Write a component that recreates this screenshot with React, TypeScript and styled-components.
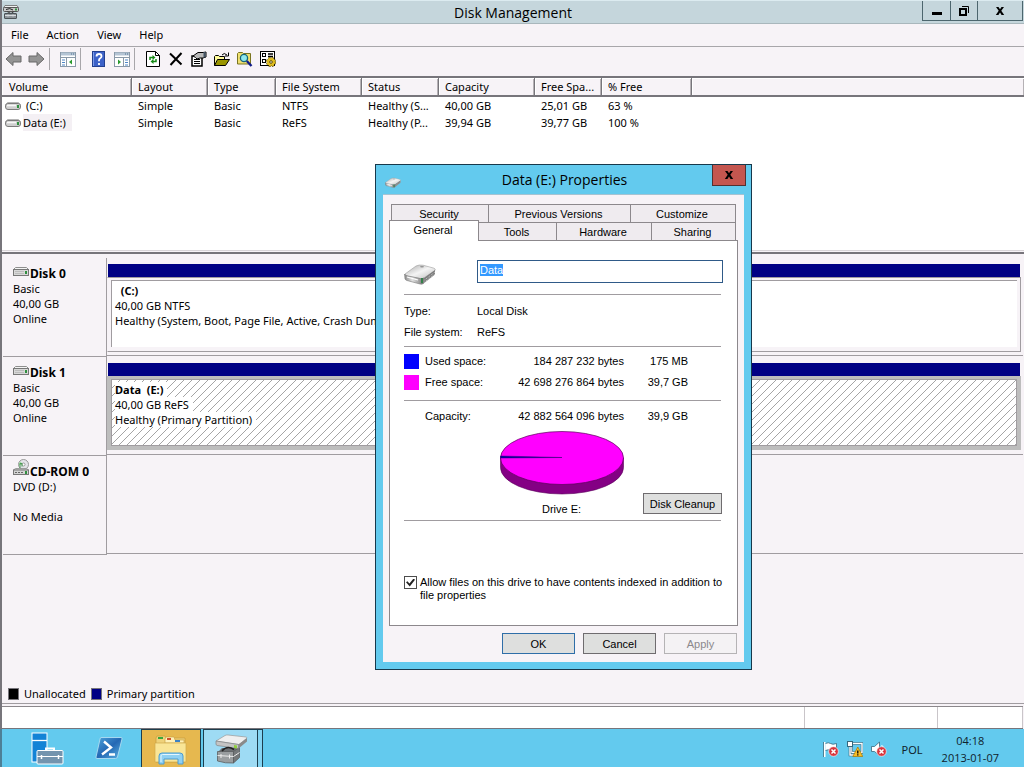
import React, { useEffect, useRef } from "react";
import styled, { createGlobalStyle, css } from "styled-components";

const UI = `"Noto Sans", "Open Sans", sans-serif`;
const TITLE = `"Open Sans", "Noto Sans", sans-serif`;
const DLG = `"Liberation Sans", Arial, sans-serif`;

const Global = createGlobalStyle`
  *, *::before, *::after { box-sizing: border-box; }
  body { margin: 0; background: #f7f3f7; color: #000; font: 11px/15px ${UI}; }
  button, input { font: inherit; color: inherit; margin: 0; border-radius: 0; }
  button { padding: 0; border: 0; background: none; }
  svg { display: block; flex: none; }
`;

const Screen = styled.div`
  position: relative;
  display: flex;
  flex-direction: column;
  min-height: 100vh;
  overflow: hidden;
`;

const MainWindow = styled.main`
  flex: 1;
  display: flex;
  flex-direction: column;
  border-left: 2px solid #77757b;
  background: #f7f3f7;
`;

const TitleBar = styled.header`
  display: grid;
  grid-template-columns: 1fr auto 1fr;
  align-items: center;
  height: 24px;
  padding: 0 1px 0 1px;
  background: #c5d6dc;
  border-top: 1px solid #dcebf0;
  border-bottom: 1px solid #a9b7bc;
`;

const WindowTitle = styled.h1`
  margin: 0;
  padding-top: 1px;
  font: 400 14px/20px ${TITLE};
`;

const CaptionButtons = styled.div`
  justify-self: end;
  align-self: start;
  display: flex;
  border: 1px solid #4d666e;
  border-top: 0;
`;

const CaptionButton = styled.button<{ $wide?: boolean }>`
  display: grid;
  place-items: center;
  width: ${(p) => (p.$wide ? 45 : 27)}px;
  height: 19px;
  & + & { border-left: 1px solid #4d666e; }
`;

const MenuBar = styled.nav`
  display: flex;
  align-items: center;
  height: 23px;
  border-bottom: 1px solid #a8a6aa;
`;

const MenuItem = styled.button`
  padding: 0 9px;
  line-height: 20px;
`;

const Toolbar = styled.div`
  display: flex;
  align-items: center;
  height: 29px;
  padding-bottom: 5px;
`;

const ToolButton = styled.button`
  display: grid;
  place-items: center;
  width: 23px;
  height: 23px;
`;

const ToolSeparator = styled.span`
  width: 1px;
  height: 22px;
  margin: 0 6px 0 1px;
  background: #a8a6aa;
`;

const VolumePane = styled.section`
  height: 175px;
  border-top: 2px solid #77757b;
  border-bottom: 1px solid #d9d5d9;
  background: #fff;
`;

const VolumeTable = styled.table`
  width: 100%;
  table-layout: fixed;
  border-collapse: separate;
  border-spacing: 0;
  text-align: left;
  th, td { padding: 0 0 0 6px; white-space: nowrap; overflow: hidden; font-weight: 400; }
  th {
    height: 19px;
    padding-top: 1px;
    line-height: 16px;
    background: #f7f3f7;
    border-right: 1px solid #77757b;
    border-bottom: 2px solid #77757b;
    box-shadow: inset 1px 1px 0 #fff, inset -1px 0 0 #b5b1b5;
  }
  th:first-child { padding-left: 7px; }
  th:last-child { border-right: 0; }
  td { height: 17px; line-height: 17px; }
  td:first-child { padding-left: 3px; }
`;

const VolumeName = styled.span<{ $selected?: boolean }>`
  display: flex;
  align-items: center;
  gap: 2px;
  span {
    padding: 0 6px 0 ${(p) => (p.$selected ? 0 : 3)}px;
    background: ${(p) => (p.$selected ? "#f4f0f4" : "transparent")};
  }
`;

const DiskPane = styled.section`
  flex: 1;
  display: flex;
  flex-direction: column;
  margin-top: 1px;
  padding: 4px 1px 0 1px;
  border-top: 2px solid #77757b;
`;

const DiskRow = styled.article`
  display: flex;
  height: 99px;
`;

const DiskLabel = styled.div`
  width: 104px;
  padding: 8px 0 0 10px;
  border-right: 1px solid #a09ca0;
  border-bottom: 1px solid #a09ca0;
  p { margin: 0; min-height: 15px; }
`;

const DiskName = styled.h2`
  display: flex;
  align-items: flex-end;
  gap: 1px;
  height: 15px;
  margin: 0;
  font-size: 12px;
  line-height: 15px;
  white-space: nowrap;
  svg { margin-bottom: 4px; }
`;

const DiskBody = styled.div`
  flex: 1;
  min-width: 0;
  height: 98px;
  padding: 6px 2px 0 0;
  border-bottom: 1px solid #a09ca0;
`;

const PartitionBar = styled.div`
  height: 13px;
  margin: 0 1px;
  background: #000084;
`;

const Partition = styled.div<{ $selected?: boolean }>`
  height: 75px;
  padding: 2px 3px 3px;
  border: 1px solid #a09ca0;
  border-left-color: #f7f3f7;
  ${(p) =>
    p.$selected &&
    css`
      height: 74px;
      background: #bdbdbd;
      border-color: #bdbdbd;
    `}
`;

const PartitionInfo = styled.div<{ $selected?: boolean }>`
  height: 67px;
  padding: 2px 3px;
  background: #fff;
  border-top: 1px solid #a09ca0;
  border-left: 1px solid #a09ca0;
  white-space: nowrap;
  overflow: hidden;
  p { width: max-content; margin: 0; padding-right: 4px; white-space: pre; }
  ${(p) =>
    p.$selected &&
    css`
      border: 1px solid #a09ca0;
      background: linear-gradient(135deg, #fff 46%, #a5a5a5 46%, #a5a5a5 54%, #fff 54%) 0 0 / 8px 8px;
      p { background: #fff; }
    `}
`;

const Legend = styled.div`
  display: flex;
  align-items: center;
  gap: 5px;
  height: 20px;
  padding-left: 6px;
  border-bottom: 1px solid #a09ca0;
`;

const LegendSwatch = styled.span<{ $color: string }>`
  width: 11px;
  height: 12px;
  border: 1px solid #77757b;
  background: ${(p) => p.$color};
`;

const StatusBar = styled.footer`
  display: grid;
  grid-template-columns: 1fr 133px 85px;
  height: 23px;
  margin: 2px 1px 0 0;
  border-top: 1px solid #8c888c;
  border-bottom: 1px solid #77757b;
  background: #fff;
  span { border-right: 1px solid #c9c5c9; }
`;

const Taskbar = styled.footer`
  display: flex;
  align-items: stretch;
  height: 38px;
  padding-left: 14px;
  border-left: 2px solid #4d7f96;
  background: #63caee;
`;

const TaskButton = styled.button<{ $width: number; $kind?: "group" | "active" }>`
  display: grid;
  place-items: center;
  width: ${(p) => p.$width}px;
  ${(p) =>
    p.$kind === "group" &&
    css`
      background: #e6b84f;
      border: solid #1d3d4d;
      border-width: 1px 1px 0;
      margin: 0 2px 0 1px;
    `}
  ${(p) =>
    p.$kind === "active" &&
    css`
      background: #9edbf4;
      border: solid #1d3d4d;
      border-width: 1px 1px 0;
    `}
`;

const TaskStack = styled.span`
  width: 5px;
  border: solid #1d3d4d;
  border-width: 1px 1px 0 0;
  background: #84d4f2;
`;

const Tray = styled.div`
  display: flex;
  align-items: center;
  gap: 8px;
  margin-left: auto;
  padding: 2px 25px 0 0;
  color: #10222c;
`;

const TrayLabel = styled.span`
  margin: 0 11px 0 7px;
`;

const Clock = styled.time`
  font: 11px/17px ${TITLE};
  text-align: center;
`;

const Dialog = styled.div`
  position: absolute;
  left: 375px;
  top: 164px;
  width: 377px;
  border: 1px solid #17384b;
  padding: 0 7px 7px;
  background: #63caee;
  font: 11px/13px ${DLG};
`;

const DialogTitle = styled.header`
  display: grid;
  grid-template-columns: 34px 1fr 34px;
  align-items: center;
  height: 29px;
  margin-right: -2px;
  > svg { margin: 5px 0 0 2px; }
  h2 {
    margin: 0;
    padding-top: 1px;
    font: 400 14px/20px ${TITLE};
    text-align: center;
  }
`;

const CloseButton = styled.button`
  align-self: start;
  display: grid;
  place-items: center;
  height: 21px;
  background: #c4564f;
  border: 1px solid #55302f;
  border-top: 0;
`;

const DialogBody = styled.form`
  padding: 9px 6px 8px;
  border-top: 1px solid #a6c3d2;
  background: #f7f3f7;
`;

const TabRow = styled.div<{ $columns: string }>`
  display: grid;
  grid-template-columns: ${(p) => p.$columns};
  height: 18px;
  margin: 0 2px;
`;

const FrontTabRow = styled(TabRow)`
  margin: 0 2px 0 0;
`;

const Tab = styled.button<{ $active?: boolean }>`
  border: 1px solid #8c888c;
  border-width: 1px 1px 0 0;
  background: #efebef;
  line-height: 15px;
  padding: 2px 2px 0 0;
  &:first-child { border-left-width: 1px; }
  ${(p) =>
    p.$active &&
    css`
      position: relative;
      z-index: 1;
      margin: -2px 0 -1px;
      padding: 0 2px 2px 0;
      background: #fff;
    `}
`;

const TabPanel = styled.div`
  height: 386px;
  padding: 19px 14px 0;
  background: #fff;
  border: 1px solid #8c888c;
`;

const NameRow = styled.div`
  display: grid;
  grid-template-columns: 73px 1fr;
  align-items: start;
  height: 34px;
  svg { margin-top: 3px; }
`;

const NameInput = styled.input`
  width: 100%;
  height: 23px;
  padding: 0 2px 3px;
  border: 1px solid #2f5a88;
  background: #fff;
  outline: none;
  &::selection { background: #3399ff; color: #fff; }
`;

const Rule = styled.hr`
  height: 1px;
  margin: 0 2px 0 0;
  border: 0;
  background: #a09ca0;
`;

const Facts = styled.dl`
  display: grid;
  grid-template-columns: 73px 1fr;
  margin: 0;
  padding: 6px 0 3px;
  line-height: 21px;
  dt, dd { margin: 0; }
`;

const SpaceTable = styled.table`
  width: 100%;
  table-layout: fixed;
  border-spacing: 0;
  padding: 4px 0 7px;
  line-height: 21px;
  th, td { padding: 0; font-weight: 400; text-align: left; height: 21px; }
  td { text-align: right; }
`;

const SpaceSwatch = styled.span<{ $color: string }>`
  display: block;
  width: 15px;
  height: 15px;
  background: ${(p) => p.$color};
`;

const CapacityTable = styled(SpaceTable)`
  padding: 5px 0 3px;
`;

const ChartRow = styled.div`
  display: grid;
  grid-template-columns: 1fr 124px 1fr;
  height: 90px;
  padding-right: 4px;
`;

const Chart = styled.figure`
  grid-column: 2;
  margin: 0;
  padding-top: 1px;
  figcaption { margin-top: 6px; line-height: 17px; text-align: center; }
`;

const PushButton = styled.button<{ $primary?: boolean }>`
  width: 73px;
  height: 21px;
  padding-top: 1px;
  background: #dedfde;
  border: 1px solid ${(p) => (p.$primary ? "#2f6ea8" : "#6f6c6f")};
  &:disabled { background: #f4f2f4; border-color: #b5b3b5; color: #8b888b; }
`;

const CleanupButton = styled(PushButton)`
  justify-self: end;
  align-self: end;
  width: 79px;
  margin: 0 -3px 6px 0;
`;

const IndexOption = styled.label`
  display: flex;
  align-items: flex-start;
  gap: 3px;
  margin-top: 55px;
`;

const TickBox = styled.input`
  appearance: none;
  flex: none;
  display: grid;
  place-items: center;
  width: 13px;
  height: 13px;
  border: 1px solid #4d4d4d;
  background: #fff;
  &:checked::before {
    content: "";
    width: 9px;
    height: 8px;
    background: #222;
    clip-path: polygon(0 48%, 16% 34%, 38% 62%, 84% 0, 100% 16%, 42% 100%);
  }
`;

const DialogButtons = styled.div`
  display: flex;
  justify-content: flex-end;
  gap: 8px;
  padding: 7px 1px 0 0;
`;

/* ---- icons ---- */

const DriveSmall = () => (
  <svg width="16" height="10" viewBox="0 0 16 10">
    <path d="M2.5 1.5h11l2 2.500H.5z" fill="#ececec" stroke="#a5a5a5" strokeWidth=".8" />
    <rect x=".5" y="2.500" width="15" height="6" rx="2.500" fill="#cfcfcf" stroke="#7c7c7c" />
    <path d="M2 4.500h9" stroke="#f8f8f8" strokeWidth="1.500" />
    <rect x="12" y="4" width="2" height="3" fill="#2f8f3f" />
  </svg>
);

const DriveBox = () => (
  <svg width="16" height="10" viewBox="0 0 16 10">
    <path d="M2.5.5h11l2 2H.5z" fill="#f4f4f4" stroke="#8e8e8e" />
    <rect x=".5" y="2.5" width="15" height="6" fill="#d8d8d8" stroke="#777" />
    <path d="M2 4.5h9M2 6.5h9" stroke="#bcbcbc" />
    <rect x="12" y="4" width="2" height="3" fill="#2f8f3f" />
  </svg>
);

const CdDrive = () => (
  <svg width="16" height="16" viewBox="0 0 16 16">
    <circle cx="10.5" cy="5.5" r="5" fill="#e3e3e8" stroke="#999" />
    <path d="M10.500 5.500L7 2.500A5 5 0 0 0 6 6z" fill="#9ed89f" />
    <circle cx="10.500" cy="5.500" r="1.500" fill="#fff" stroke="#888" strokeWidth=".8" />
    <path d="M7 9V4.500h2v3" stroke="#4a9a55" fill="none" />
    <path d="M2.500 9.500h11l2 1.500H.5z" fill="#f4f4f4" stroke="#888" strokeWidth=".8" />
    <rect x=".5" y="11" width="15" height="4.500" fill="#d4d4d4" stroke="#777" />
    <path d="M2 13.500h8" stroke="#666" strokeDasharray="2 1" />
    <rect x="12" y="12" width="2" height="3" fill="#2f8f3f" />
  </svg>
);

const DiskMgmtSmall = () => (
  <svg width="16" height="16" viewBox="0 0 16 16">
    <path d="M2 1.500h12l1.500 2.500H.5z" fill="#f1f1f1" stroke="#666" strokeWidth=".8" />
    <rect x=".5" y="3.500" width="15" height="4" rx="1" fill="#c9c9c9" stroke="#555" />
    <path d="M3 5.500q4-2 7 .5" stroke="#222" fill="none" />
    <rect x="12" y="4.500" width="2" height="2" fill="#2f8f3f" />
    <path d="M4 7.500l4 2 3-2" fill="none" stroke="#444" />
    <rect x="1.500" y="9.500" width="12" height="5" rx=".5" fill="#8d9499" stroke="#4c5357" />
    <path d="M2 11.500h11M5 10.500v2M10 10.500v2" stroke="#d8dcdf" />
  </svg>
);

const DriveLarge = ({ w = 32, h = 22 }: { w?: number; h?: number }) => (
  <svg width={w} height={h} viewBox="0 0 32 22">
    <defs>
      <linearGradient id="driveTop" x1="0" y1="0" x2="1" y2="1">
        <stop offset="0" stopColor="#a8a8a8" />
        <stop offset=".5" stopColor="#f4f4f4" />
        <stop offset="1" stopColor="#bcbcbc" />
      </linearGradient>
      <linearGradient id="driveFront" x1="0" y1="0" x2="1" y2="0">
        <stop offset="0" stopColor="#8d8d8d" />
        <stop offset=".4" stopColor="#e2e2e2" />
        <stop offset="1" stopColor="#707070" />
      </linearGradient>
    </defs>
    <path d="M1 11L12 3q3-1.500 7-.8l11 3q2 .8 1 2.300L20 15q-1.500 1-4 .6L2 13q-1.300-1-1-2z" fill="url(#driveTop)" stroke="#9c9c9c" strokeWidth=".6" />
    <path d="M.6 11l.4 5q.5 1 2 1.500L16 21q2 .5 3.500-.5l.5-5.500q-1.500 1-3.500.6L2 12.500z" fill="url(#driveFront)" stroke="#777" strokeWidth=".6" />
    <path d="M20 15L31 7v4.500L19.500 20.500z" fill="#7c7c7c" />
    <path d="M20.500 17L31 9M20.500 19L31 11" stroke="#ddd" strokeWidth=".8" strokeDasharray="1 1" />
    <ellipse cx="18" cy="3.800" rx="2" ry=".8" fill="#909090" />
    <rect x="17" y="15" width="2" height="5" fill="#35804a" />
    <path d="M3 14l11 3" stroke="#fff" strokeWidth="1.200" />
  </svg>
);

const Minimize = () => (
  <svg width="12" height="12"><path d="M1 7h10v3H1z" /></svg>
);
const Restore = () => (
  <svg width="12" height="12">
    <path d="M4 1.500h6.500V8" fill="none" stroke="#000" />
    <rect x="2" y="4" width="6" height="6" fill="none" stroke="#000" strokeWidth="2" />
  </svg>
);
const Cross = () => (
  <svg width="10" height="10" viewBox="0 0 10 10">
    <path d="M1 1h2.500L5 3.300 6.500 1H9L6.300 4.800 9.200 9H6.600L5 6.500 3.400 9H.8l2.900-4.200z" />
  </svg>
);

const Arrow = ({ flip }: { flip?: boolean }) => (
  <svg width="17" height="16" viewBox="0 0 17 16">
    <path
      transform={flip ? "translate(17 0) scale(-1 1)" : undefined}
      d="M1 8l7-6.500v3.500h8v6H8v3.500z"
      fill="#949494"
      stroke="#686868"
      strokeLinejoin="round"
    />
  </svg>
);

const PanelIcon = ({ flip }: { flip?: boolean }) => (
  <svg width="16" height="15" viewBox="0 0 16 15">
    <rect x=".5" y=".5" width="15" height="14" fill="#fff" stroke="#8a99a8" />
    <path d="M1 2h14" stroke="#b4c4d4" strokeWidth="3" />
    <path d="M11 2h1M13 2h1" stroke="#4f6f8f" />
    <path d="M1 5.500h14" stroke="#8a99a8" />
    {flip ? (
      <>
        <path d="M9.500 6v9" stroke="#8a99a8" />
        <path d="M4 7.500v5l3-2.500z" fill="#2b9a2f" />
        <path d="M11 8h3M11 10.500h3M11 13h3" stroke="#4f86c6" />
      </>
    ) : (
      <>
        <path d="M6.500 6v9" stroke="#8a99a8" />
        <path d="M12 7.500v5L9 10z" fill="#2b9a2f" />
        <path d="M2 8h3M2 10.500h3M2 13h3" stroke="#4f86c6" />
      </>
    )}
  </svg>
);

const HelpIcon = () => (
  <svg width="13" height="16" viewBox="0 0 13 16">
    <rect x=".5" y=".5" width="12" height="15" fill="#3d62c8" stroke="#23408f" />
    <path d="M1.500 1v14" stroke="#7c9be8" />
    <path d="M4.500 5.500q0-2.500 2.500-2.500t2.500 2.300q0 1.200-1.300 2T7 9.500v.8M7 12v2" fill="none" stroke="#fff" strokeWidth="1.800" />
  </svg>
);

const RefreshIcon = () => (
  <svg width="14" height="16" viewBox="0 0 14 16">
    <path d="M.5.500h9l4 4v11H.5z" fill="#fff" stroke="#000" />
    <path d="M9.500.500v4h4" fill="none" stroke="#000" />
    <path d="M4 9V6.500h3M10 8v2.500H7" fill="none" stroke="#168a16" strokeWidth="1.500" />
    <path d="M6.500 4v5l3-2.500zM7.500 8v5l-3-2.500z" fill="#168a16" />
  </svg>
);

const DeleteIcon = () => (
  <svg width="14" height="14" viewBox="0 0 14 14">
    <path d="M1 1.500l11.500 11M12.500 1L1.500 13" stroke="#000" strokeWidth="2" fill="none" />
  </svg>
);

const PropertiesIcon = () => (
  <svg width="16" height="16" viewBox="0 0 16 16">
    <path d="M1 5h10v10H1z" fill="#fff" stroke="#000" strokeWidth="1.500" />
    <path d="M3 8.500h6M3 10.500h6M3 12.500h6" stroke="#000" />
    <path d="M2 5l5-3.500 5 0 3-.5v5l-3 1H9L6 8 4.500 6.500z" fill="#b9b9b9" stroke="#000" />
    <path d="M13.500 1v5.500" stroke="#456" strokeWidth="2" />
  </svg>
);

const OpenIcon = () => (
  <svg width="16" height="15" viewBox="0 0 16 15">
    <path d="M.5 13.500v-9l1-1h3l1 1h5v3" fill="#fffb9a" stroke="#000" />
    <path d="M.5 13.500l3-6h12l-4 6z" fill="#9a9600" stroke="#000" />
    <path d="M8 3q2-3 5 0M14.500.500V4H11" fill="none" stroke="#000" />
  </svg>
);

const FindIcon = () => (
  <svg width="16" height="16" viewBox="0 0 16 16">
    <path d="M.5 13V2.500l1-1h4l1 1h7V13z" fill="#f0e070" stroke="#7a7420" />
    <circle cx="7" cy="7" r="3.600" fill="#8fe9f0" stroke="#15657a" strokeWidth="1.300" />
    <path d="M9.800 10l4.700 5" stroke="#101c8a" strokeWidth="2.400" />
  </svg>
);

const SettingsIcon = () => (
  <svg width="16" height="16" viewBox="0 0 16 16">
    <rect x=".500" y=".500" width="14" height="14" fill="#fff" stroke="#000" />
    <rect x="2.500" y="2.500" width="3" height="3" fill="none" stroke="#000" />
    <rect x="2.500" y="8.500" width="3" height="3" fill="none" stroke="#000" />
    <path d="M8 3h5M8 5.500h5" stroke="#000" strokeWidth="1.300" />
    <circle cx="11" cy="11" r="3.800" fill="none" stroke="#5d4d00" strokeDasharray="2 1" strokeWidth="2.400" />
    <circle cx="11" cy="11" r="3.800" fill="#e0bd20" stroke="#e0bd20" strokeDasharray="1.600 1.400" strokeWidth="1.400" />
    <circle cx="11" cy="11" r="1.300" fill="#fff" stroke="#5d4d00" />
  </svg>
);

const ServerManager = () => (
  <svg width="34" height="34" viewBox="0 0 34 34">
    <rect x="2" y="2" width="15" height="29" fill="#1383d6" stroke="#fff" />
    <path d="M2 9.500h15" stroke="#fff" strokeWidth="1.300" />
    <path d="M16 20v-2.500h8V20" fill="none" stroke="#fff" strokeWidth="2" />
    <rect x="7" y="19.500" width="26" height="13.500" rx="1" fill="#7394ae" stroke="#fff" />
    <path d="M7 25.500h26" stroke="#fff" />
    <path d="M11.500 24v4M28.500 24v4" stroke="#fff" strokeWidth="1.500" />
  </svg>
);

const PowerShell = () => (
  <svg width="28" height="24" viewBox="0 0 28 24">
    <defs>
      <linearGradient id="ps" x1="0" y1="0" x2="1" y2="1">
        <stop offset="0" stopColor="#4fa5dc" />
        <stop offset=".5" stopColor="#2468b4" />
        <stop offset="1" stopColor="#5cb4e4" />
      </linearGradient>
    </defs>
    <path d="M6 1.500h20q1.500 0 1 1.500l-4.500 18q-.5 1.500-2 1.500H2q-1.500 0-1-1.500L5 3q.3-1.500 1-1.500z" fill="url(#ps)" stroke="#a5d8f0" />
    <path d="M9 5.500l7 6-9 7M14 18.500h6" fill="none" stroke="#fff" strokeWidth="2.400" />
  </svg>
);

const Explorer = () => (
  <svg width="34" height="32" viewBox="0 0 34 32">
    <path d="M2 5l1-2h8l1 2h19v24H2z" fill="#efd27a" stroke="#c59b3c" strokeWidth=".7" />
    <path d="M4 4h5v2H4z" fill="#3aa63a" />
    <path d="M11 6l1-2h8l1 3h9v3H11z" fill="#fff1b8" stroke="#c59b3c" strokeWidth=".6" />
    <path d="M13 5h4v2h-4z" fill="#d2502c" />
    <path d="M21 7h5v2h-5z" fill="#3b82c4" />
    <path d="M1 10h31v19H1z" fill="#f9e596" stroke="#d0a94a" strokeWidth=".7" />
    <path d="M5 31V23q0-3 3-3h18q3 0 3 3v8h-5v-5H10v5z" fill="#8fd0f2" stroke="#4d9cd0" />
    <path d="M7 29v-6q0-1.500 1.500-1.500h17" fill="none" stroke="#e3f6ff" />
  </svg>
);

const DiskMgmtLarge = () => (
  <svg width="34" height="32" viewBox="0 0 34 32">
    <path d="M4 19l4-4h17v9l-6 6z" fill="#6c7073" />
    <path d="M3.500 18.500h16V30q-8 .500-16-2z" fill="#9a9ea0" stroke="#5a5e60" strokeWidth=".8" />
    <path d="M19.500 18.500l6-4v10l-6 5.500z" fill="#74787a" stroke="#5a5e60" strokeWidth=".8" />
    <path d="M3.500 22.500l16 1 6-4M7 21v4M15.500 21.500v4" stroke="#ececec" fill="none" />
    <path d="M2 8L11 2.500q1-.7 3-.5l18 2q1.500.3.500 1.500L25 11.500z" fill="#efefef" stroke="#999" strokeWidth=".7" />
    <path d="M2 8l22.500 3.500v4L3 12.500q-1-.5-1-1.500z" fill="#c4c4c4" stroke="#777" strokeWidth=".6" />
    <path d="M24.500 11.500L33 5v3.500l-8.500 7z" fill="#8a8a8a" />
    <path d="M8 18q5-6 12-1.500" fill="none" stroke="#222" strokeWidth="1.500" />
    <path d="M20 12l3 .5v3l-3-.5z" fill="#8ed13c" />
  </svg>
);

const Fault = ({ x, y }: { x: number; y: number }) => (
  <g transform={`translate(${x} ${y})`}>
    <circle cx="4.500" cy="4.500" r="4.800" fill="#d8343c" stroke="#fff" strokeWidth=".6" />
    <path d="M2.500 2.500l4 4M6.500 2.500l-4 4" stroke="#fff" strokeWidth="1.500" />
  </g>
);

const FlagIcon = () => (
  <svg width="16" height="16" viewBox="0 0 16 16">
    <path d="M1.500 1v15" stroke="#fff" strokeWidth="2" />
    <path d="M.5 1v15M2.500 2.500q3-1.500 5 0t6 0v7q-3 1.500-5.500 0t-5.500 0" fill="#fff" stroke="#36677c" strokeWidth=".8" />
    <Fault x={6} y={6} />
  </svg>
);
const NetworkIcon = () => (
  <svg width="16" height="16" viewBox="0 0 16 16">
    <rect x="4.500" y="2.500" width="10.500" height="9" fill="#63caee" stroke="#36677c" strokeWidth="2.600" />
    <rect x="4.500" y="2.500" width="10.500" height="9" fill="none" stroke="#fff" strokeWidth="1.400" />
    <path d="M3 5v9h6" fill="none" stroke="#36677c" strokeWidth="2.600" />
    <path d="M3 5v9h5.500" fill="none" stroke="#fff" strokeWidth="1.400" />
    <rect x=".500" y=".500" width="5" height="5" fill="#fff" stroke="#36677c" />
    <path d="M10.800 6l5 9.500h-10z" fill="#f7bd26" stroke="#a87700" strokeWidth=".7" />
    <path d="M10.800 9.500v3M10.800 13.300v1.200" stroke="#000" strokeWidth="1.300" />
  </svg>
);
const SoundIcon = () => (
  <svg width="16" height="16" viewBox="0 0 16 16">
    <path d="M.5 5.500h3L8.500 1v13.500l-5-4h-3z" fill="#fff" stroke="#36677c" strokeWidth=".8" />
    <path d="M10.500 4q2 1.500 2 4" fill="none" stroke="#fff" />
    <Fault x={6} y={6} />
  </svg>
);

const UsagePie = () => (
  <svg width="124" height="64" viewBox="0 0 124 64" role="img" aria-label="Disk usage">
    <path d="M.5 27v9.500a61.500 26.500 0 0 0 123 0V27z" fill="#840084" stroke="#5a005a" strokeWidth=".6" />
    <ellipse cx="62" cy="27" rx="61.500" ry="26.500" fill="#ff00ff" stroke="#5a005a" strokeWidth=".7" />
    <path d="M.5 25L62 26.500 .5 27z" fill="#0000a8" stroke="#300070" strokeWidth=".5" />
  </svg>
);

/* ---- data ---- */

const columns: [string, number | undefined][] = [
  ["Volume", 130], ["Layout", 76], ["Type", 68], ["File System", 86], ["Status", 77],
  ["Capacity", 96], ["Free Spa...", 67], ["% Free", 90], ["", undefined],
];

const volumes = [
  { name: "(C:)", cells: ["Simple", "Basic", "NTFS", "Healthy (S...", "40,00 GB", "25,01 GB", "63 %", ""] },
  { name: "Data (E:)", selected: true, cells: ["Simple", "Basic", "ReFS", "Healthy (P...", "39,94 GB", "39,77 GB", "100 %", ""] },
];

const disks = [
  {
    name: "Disk 0", icon: <DriveBox />, lines: ["Basic", "40,00 GB", "Online"],
    partition: { title: "  (C:)", lines: ["40,00 GB NTFS", "Healthy (System, Boot, Page File, Active, Crash Dump)"], selected: false },
  },
  {
    name: "Disk 1", icon: <DriveBox />, lines: ["Basic", "40,00 GB", "Online"],
    partition: { title: "Data  (E:)", lines: ["40,00 GB ReFS", "Healthy (Primary Partition)"], selected: true },
  },
  { name: "CD-ROM 0", icon: <CdDrive />, lines: ["DVD (D:)", "", "No Media"] },
];

const tools: ([string, React.ReactNode] | null)[] = [
  ["Back", <Arrow />], ["Forward", <Arrow flip />], null,
  ["Console tree", <PanelIcon />], null,
  ["Help", <HelpIcon />], ["Action pane", <PanelIcon flip />], null,
  ["Refresh", <RefreshIcon />], ["Delete", <DeleteIcon />], ["Properties", <PropertiesIcon />],
  ["Open", <OpenIcon />], ["Explore", <FindIcon />], ["Settings", <SettingsIcon />],
];

const SpaceCols = () => (
  <colgroup>
    <col style={{ width: 21 }} /><col style={{ width: 74 }} /><col style={{ width: 125 }} /><col style={{ width: 64 }} /><col />
  </colgroup>
);

function PropertiesDialog() {
  const nameRef = useRef<HTMLInputElement>(null);
  useEffect(() => {
    nameRef.current?.focus();
    nameRef.current?.select();
  }, []);
  return (
    <Dialog role="dialog" aria-labelledby="props-title">
      <DialogTitle>
        <DriveLarge w={16} h={11} />
        <h2 id="props-title">Data (E:) Properties</h2>
        <CloseButton aria-label="Close"><Cross /></CloseButton>
      </DialogTitle>
      <DialogBody onSubmit={(e) => e.preventDefault()}>
        <TabRow role="tablist" $columns="98px 142px 1fr">
          {["Security", "Previous Versions", "Customize"].map((t) => (
            <Tab key={t} type="button" role="tab">{t}</Tab>
          ))}
        </TabRow>
        <FrontTabRow role="tablist" $columns="90px 78px 95px 1fr">
          {["General", "Tools", "Hardware", "Sharing"].map((t, i) => (
            <Tab key={t} type="button" role="tab" $active={i === 0} aria-selected={i === 0}>{t}</Tab>
          ))}
        </FrontTabRow>
        <TabPanel role="tabpanel">
          <NameRow>
            <DriveLarge />
            <NameInput ref={nameRef} aria-label="Volume label" defaultValue="Data" />
          </NameRow>
          <Rule />
          <Facts>
            <dt>Type:</dt><dd>Local Disk</dd>
            <dt>File system:</dt><dd>ReFS</dd>
          </Facts>
          <Rule />
          <SpaceTable>
            <SpaceCols />
            <tbody>
              <tr><td><SpaceSwatch $color="#0000ff" /></td><th scope="row">Used space:</th><td>184 287 232 bytes</td><td>175 MB</td><td /></tr>
              <tr><td><SpaceSwatch $color="#ff00ff" /></td><th scope="row">Free space:</th><td>42 698 276 864 bytes</td><td>39,7 GB</td><td /></tr>
            </tbody>
          </SpaceTable>
          <Rule />
          <CapacityTable>
            <SpaceCols />
            <tbody>
              <tr><td /><th scope="row">Capacity:</th><td>42 882 564 096 bytes</td><td>39,9 GB</td><td /></tr>
            </tbody>
          </CapacityTable>
          <ChartRow>
            <Chart>
              <UsagePie />
              <figcaption>Drive E:</figcaption>
            </Chart>
            <CleanupButton type="button">Disk Cleanup</CleanupButton>
          </ChartRow>
          <Rule />
          <IndexOption>
            <TickBox type="checkbox" defaultChecked />
            <span>Allow files on this drive to have contents indexed in addition to file properties</span>
          </IndexOption>
        </TabPanel>
        <DialogButtons>
          <PushButton $primary type="submit">OK</PushButton>
          <PushButton type="button">Cancel</PushButton>
          <PushButton type="button" disabled>Apply</PushButton>
        </DialogButtons>
      </DialogBody>
    </Dialog>
  );
}

export default function App() {
  return (
    <Screen>
      <Global />
      <MainWindow>
        <TitleBar>
          <DiskMgmtSmall />
          <WindowTitle>Disk Management</WindowTitle>
          <CaptionButtons>
            <CaptionButton aria-label="Minimize"><Minimize /></CaptionButton>
            <CaptionButton aria-label="Restore"><Restore /></CaptionButton>
            <CaptionButton $wide aria-label="Close window"><Cross /></CaptionButton>
          </CaptionButtons>
        </TitleBar>
        <MenuBar>
          {["File", "Action", "View", "Help"].map((m) => <MenuItem key={m}>{m}</MenuItem>)}
        </MenuBar>
        <Toolbar>
          {tools.map((t, i) => t
            ? <ToolButton key={i} aria-label={t[0]}>{t[1]}</ToolButton>
            : <ToolSeparator key={i} />)}
        </Toolbar>
        <VolumePane>
          <VolumeTable>
            <colgroup>{columns.map(([n, w]) => <col key={n} style={{ width: w }} />)}</colgroup>
            <thead><tr>{columns.map(([n]) => <th key={n} scope="col">{n}</th>)}</tr></thead>
            <tbody>
              {volumes.map((v) => (
                <tr key={v.name}>
                  <td><VolumeName $selected={v.selected}><DriveSmall /><span>{v.name}</span></VolumeName></td>
                  {v.cells.map((c, i) => <td key={i}>{c}</td>)}
                </tr>
              ))}
            </tbody>
          </VolumeTable>
        </VolumePane>
        <DiskPane>
          {disks.map((d) => (
            <DiskRow key={d.name}>
              <DiskLabel>
                <DiskName>{d.icon}{d.name}</DiskName>
                {d.lines.map((l, i) => <p key={i}>{l}</p>)}
              </DiskLabel>
              <DiskBody>
                {d.partition && (
                  <>
                    <PartitionBar />
                    <Partition $selected={d.partition.selected}>
                      <PartitionInfo $selected={d.partition.selected}>
                        <p><b>{d.partition.title}</b></p>
                        {d.partition.lines.map((l) => <p key={l}>{l}</p>)}
                      </PartitionInfo>
                    </Partition>
                  </>
                )}
              </DiskBody>
            </DiskRow>
          ))}
        </DiskPane>
        <Legend>
          <LegendSwatch $color="#000" />Unallocated
          <LegendSwatch $color="#000084" />Primary partition
        </Legend>
        <StatusBar><span /><span /><span /></StatusBar>
      </MainWindow>
      <Taskbar>
        <TaskButton $width={62} aria-label="Server Manager"><ServerManager /></TaskButton>
        <TaskButton $width={62} aria-label="PowerShell"><PowerShell /></TaskButton>
        <TaskButton $width={60} $kind="group" aria-label="File Explorer"><Explorer /></TaskButton>
        <TaskButton $width={55} $kind="active" aria-label="Disk Management"><DiskMgmtLarge /></TaskButton>
        <TaskStack />
        <Tray>
          <FlagIcon /><NetworkIcon /><SoundIcon />
          <TrayLabel>POL</TrayLabel>
          <Clock>04:18<br />2013-01-07</Clock>
        </Tray>
      </Taskbar>
      <PropertiesDialog />
    </Screen>
  );
}
